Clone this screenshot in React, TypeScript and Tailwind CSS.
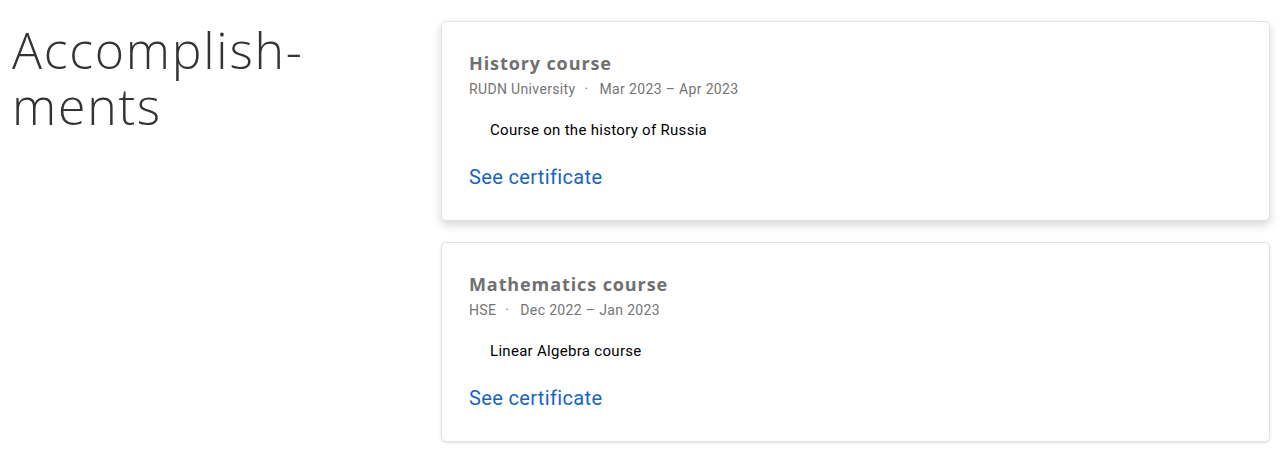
import React from 'react';

const courses = [
  {
    title: 'History course',
    org: 'RUDN University',
    dates: 'Mar 2023 – Apr 2023',
    description: 'Course on the history of Russia',
    raised: true,
  },
  {
    title: 'Mathematics course',
    org: 'HSE',
    dates: 'Dec 2022 – Jan 2023',
    description: 'Linear Algebra course',
    raised: false,
  },
];

const App: React.FC = () => {
  return (
    <div className="flex bg-white min-h-[476px] pt-[21px] pl-[12px] pr-[14px]">
      <div className="w-[429px] shrink-0">
        <h2 className="font-['Open_Sans',sans-serif] font-[350] text-[#333333] text-[50px] leading-[56px] tracking-[0.035em] mt-[1px]">
          Accomplish-
          <br />
          ments
        </h2>
      </div>

      <div className="flex-1 flex flex-col gap-[21px]">
        {courses.map((c, idx) => (
          <div
            key={idx}
            className={`bg-white border border-[#e3e3e3] rounded-[5px] h-[200px] px-[27px] pt-[28px] ${
              c.raised ? 'shadow-[0_4px_10px_rgba(0,0,0,0.16)]' : 'shadow-[0_1px_3px_rgba(0,0,0,0.12)]'
            }`}
          >
            <h3 className="font-['Open_Sans',sans-serif] font-bold text-[18px] leading-[26px] tracking-[0.05em] text-[#707070]">
              {c.title}
            </h3>
            <div className="font-['Roboto',sans-serif] text-[14px] leading-[20px] tracking-[0.35px] text-[#757575] mt-[3px]">
              {c.org}
              <span className="ml-[9px] mr-[11px]">·</span>
              {c.dates}
            </div>
            <p className="font-['Roboto',sans-serif] text-[15px] leading-[20px] tracking-[0.3px] text-black pl-[21px] mt-[21px]">
              {c.description}
            </p>
            <a className="block font-['Roboto',sans-serif] text-[20px] leading-[28px] tracking-[0.35px] text-[#1565c0] mt-[23px]">
              See certificate
            </a>
          </div>
        ))}
      </div>
    </div>
  );
};

export default App;
